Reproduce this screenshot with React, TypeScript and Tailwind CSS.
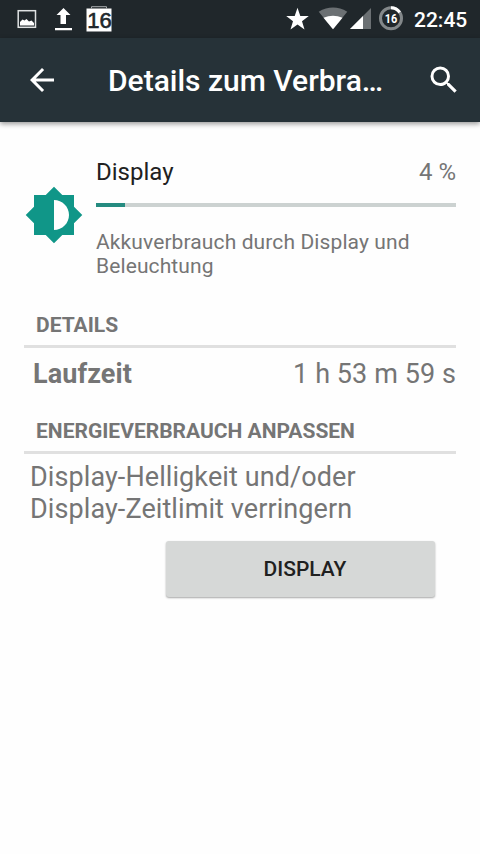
import React from 'react';

const StatusBar: React.FC = () => (
  <div className="flex h-[38px] items-center bg-[#20272b] text-white">
    {/* Notifications */}
    <svg width="120" height="38" viewBox="0 0 120 38" fill="none">
      <rect x="18.2" y="10.7" width="17.3" height="16.6" stroke="#dfe2e3" strokeWidth="1.5" />
      <path d="M20 25.5v-3.5l2.5-2.5 2 1 2-1.5 2.5 2.5 2.5-1 2.5 2.5v2.5z" fill="#fff" />
      <path d="M63.5 8l7 7H66v9h-5.500v-9H56.500zM55 28h17v2.300H55z" fill="#fff" />
      <path d="M86.500 8.500h25v23h-25z" fill="#fff" />
      <path d="M91.500 8.500V6.700h15v1.800" stroke="#a9adaf" />
      <text x="99.500" y="27.700" textAnchor="middle" fontFamily="Liberation Sans" fontSize="22" fill="#20272b" stroke="#20272b" strokeWidth="0.6">16</text>
    </svg>

    {/* System icons and clock */}
    <svg className="ml-auto" width="126" height="38" viewBox="0 0 126 38" fill="none">
      <path d="M17.500 7.800l2.800 8.200h8.500l-6.800 5.200 2.500 8.200-7-5-7 5 2.500-8.200L6.200 16h8.500z" fill="#fff" />
      <path d="M38.700 11.700Q53 3.500 67.300 11.700L53 29.300z" fill="#6b7073" />
      <path d="M43.500 17.800Q53 13.500 62.500 17.800L53 29.300z" fill="#fff" />
      <path d="M91 8v21H70z" fill="#6b7073" />
      <path d="M83 16v13H70z" fill="#fff" />
      <circle cx="111" cy="18.300" r="10.500" stroke="#83888a" strokeWidth="3" />
      <path d="M111 7.800a10.500 10.500 0 0 1 8.700 4.600" stroke="#fff" strokeWidth="3" />
      <text x="111" y="23" textAnchor="middle" textLength="12.500" lengthAdjust="spacingAndGlyphs" fontFamily="Roboto" fontWeight="700" fontSize="12.700" fill="#fff">16</text>
    </svg>
    <span className="ml-[8px] w-[66px] pt-px text-[21px] leading-[38px] font-medium">22:45</span>
  </div>
);

const AppBar: React.FC = () => (
  <header className="relative flex h-[84px] items-center bg-[#263238] text-white shadow-[0_2px_5px_rgba(0,0,0,0.4)]">
    <button className="ml-6 h-9 w-9" aria-label="Zurück">
      <svg width="36" height="36" viewBox="0 0 24 24" fill="currentColor">
        <path d="M20 11H7.830l5.590-5.590L12 4l-8 8 8 8 1.410-1.410L7.830 13H20v-2z" />
      </svg>
    </button>
    <h1 className="ml-12 flex-1 pt-0.5 text-[30px] leading-[82px] font-medium whitespace-nowrap">Details zum Verbra…</h1>
    <button className="mr-[18px] h-9 w-9" aria-label="Suchen">
      <svg width="36" height="36" viewBox="0 0 24 24" fill="currentColor">
        <path d="M15.500 14h-.79l-.28-.27A6.471 6.471 0 0 0 16 9.500 6.500 6.500 0 1 0 9.500 16c1.610 0 3.090-.59 4.230-1.570l.27.28v.79l5 4.990L20.490 19l-4.990-5zm-6 0C7.010 14 5 11.990 5 9.500S7.010 5 9.500 5 14 7.010 14 9.500 11.990 14 9.500 14z" />
      </svg>
    </button>
  </header>
);

const SectionTitle: React.FC<{ children: React.ReactNode }> = ({ children }) => (
  <h2 className="h-[37px] border-b-[3px] border-[#e0e0e0] pl-3 text-[21px] leading-[28px] font-bold uppercase">
    {children}
  </h2>
);

const App: React.FC = () => {
  const percent = 4;

  return (
    <div className="flex h-[854px] w-[480px] flex-col overflow-hidden bg-[#fefefe] font-['Roboto',sans-serif] text-[#757575]">
      <StatusBar />
      <AppBar />

      <main className="px-6 pt-9">
        {/* Usage summary */}
        <div className="flex gap-3">
          <svg className="mt-[27px] shrink-0" width="60" height="60" viewBox="0 0 24 24" fill="#109688">
            <path d="M20 15.310L23.310 12 20 8.690V4h-4.690L12 .69 8.690 4H4v4.690L.69 12 4 15.310V20h4.690L12 23.310 15.310 20H20v-4.690zM12 18V6c3.310 0 6 2.690 6 6s-2.690 6-6 6z" />
          </svg>
          <div className="flex-1">
            <div className="flex justify-between text-[24px] leading-[28px]">
              <span className="text-[#212121]">Display</span>
              <span>{percent} %</span>
            </div>
            <div className="mt-[17px] h-1 bg-[#ccd2d1]">
              <div className="h-full bg-[#258b80]" style={{ width: `${percent * 2}%` }} />
            </div>
            <p className="mt-[23px] text-[21px] leading-6 tracking-[0.11px]">
              Akkuverbrauch durch Display und Beleuchtung
            </p>
          </div>
        </div>

        <section className="mt-[33px]">
          <SectionTitle>Details</SectionTitle>
          <div className="mt-[10px] flex justify-between pl-[9px] text-[27px] leading-8 tracking-[0.08px]">
            <span className="font-bold">Laufzeit</span>
            <span>1 h 53 m 59 s</span>
          </div>
        </section>

        <section className="mt-[27px]">
          <SectionTitle>Energieverbrauch anpassen</SectionTitle>
          <p className="mt-[7px] pl-[6px] text-[27px] leading-8 tracking-[0.09px]">
            Display-Helligkeit und/oder
            <br />
            Display-Zeitlimit verringern
          </p>
          <button className="mt-4 ml-[142px] block h-[56px] w-[269px] rounded-[3px] bg-[#d6d8d7] pt-0.5 pl-[9px] text-[21px] font-medium text-[#1f2020] uppercase shadow-[0_1px_2px_rgba(0,0,0,0.35)]">
            Display
          </button>
        </section>
      </main>
    </div>
  );
};

export default App;
